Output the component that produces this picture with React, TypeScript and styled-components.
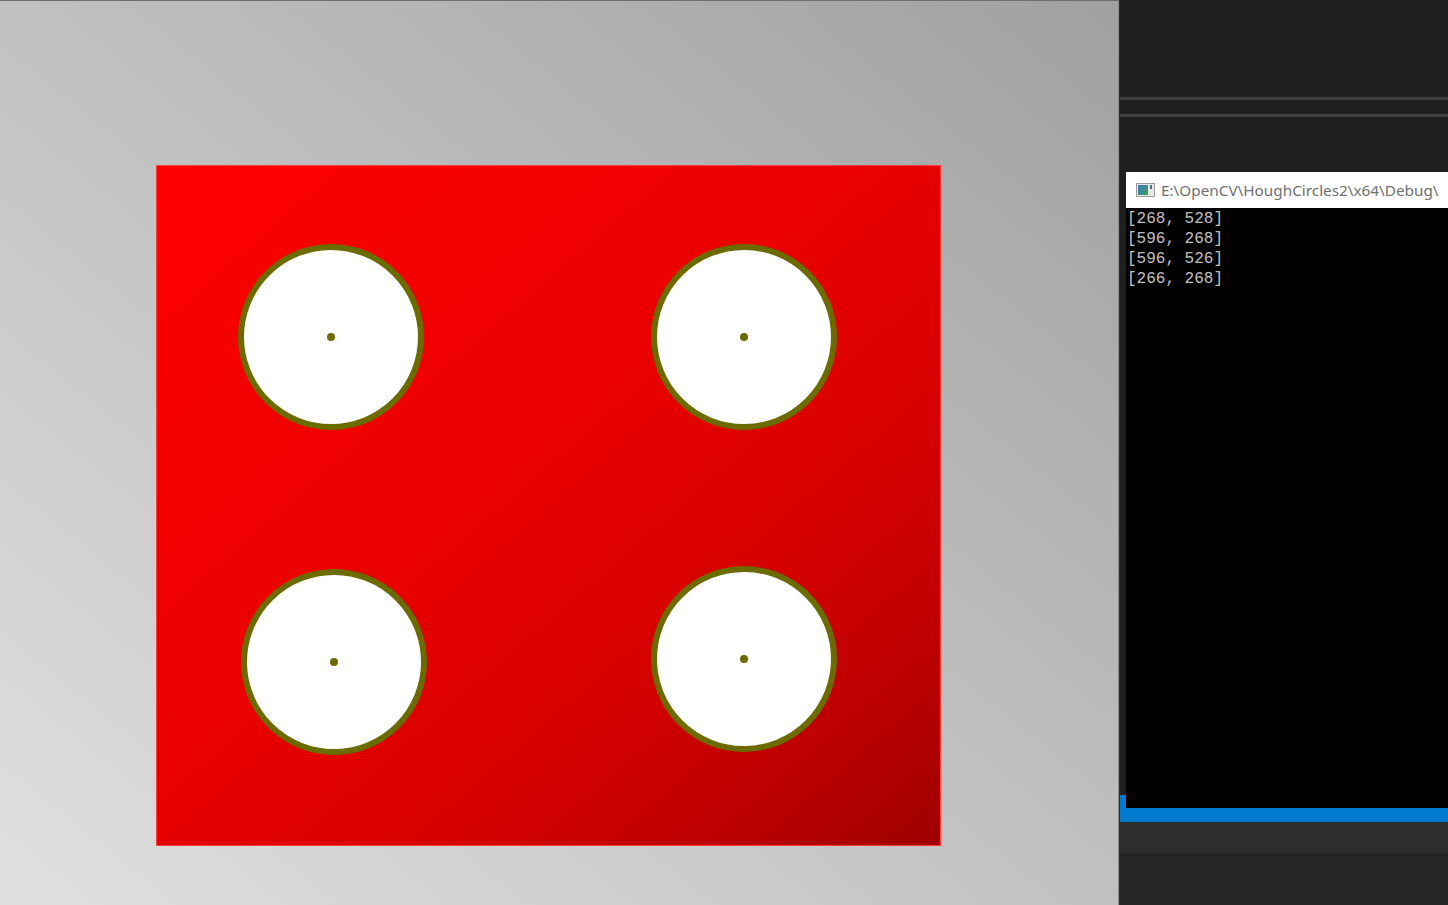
import React from "react";
import styled, { createGlobalStyle } from "styled-components";

const Global = createGlobalStyle`
  html, body { margin: 0; padding: 0; width: 1448px; height: 905px; overflow: hidden; background: #1f1f1f; }
  #root { width: 1448px; height: 905px; }
`;

const Desktop = styled.div`
  display: flex;
  width: 1448px;
  height: 905px;
  overflow: hidden;
`;

const ImageViewer = styled.div`
  width: 1119px;
  flex: none;
  box-sizing: border-box;
  padding: 164px 0 0 156px;
  border-top: 1px solid #6e6e6e;
  border-right: 1px solid #8c8c8c;
  background: linear-gradient(to top right, #e0e0e0 0%, #c4c4c4 45%, #a0a0a0 100%);
`;

const Ide = styled.div`
  position: relative;
  flex: 1;
  display: flex;
  flex-direction: column;
  background: #1f1f1f;
  border-left: 1px solid #2c2c2c;
  overflow: hidden;
`;

const Band = styled.div<{ $h: number; $bg: string }>`
  height: ${(p) => p.$h}px;
  flex: none;
  background: ${(p) => p.$bg};
`;

const Fill = styled.div`
  flex: 1;
  background: #1f1f1f;
`;

const ConsoleWindow = styled.div`
  position: absolute;
  left: 6px;
  top: 172px;
  width: 400px;
  height: 636px;
  display: flex;
  flex-direction: column;
  background: #000;
`;

const TitleBar = styled.div`
  height: 36px;
  flex: none;
  display: flex;
  align-items: center;
  gap: 6px;
  padding-left: 10px;
  background: #ffffff;
  font-family: "Noto Sans", "Liberation Sans", sans-serif;
  font-size: 15.3px;
  color: #707070;
  white-space: nowrap;
  overflow: hidden;
`;

const IconBox = styled.span`
  flex: none;
  display: flex;
  width: 19px;
  height: 14px;
`;

const ConsoleBody = styled.pre`
  margin: 0;
  padding: 1px 0 0 1px;
  font-family: "Liberation Mono", "DejaVu Sans Mono", monospace;
  font-size: 16px;
  line-height: 20px;
  color: #c0c0c0;
`;

const ConsoleIcon = () => (
  <IconBox>
    <svg width="19" height="14" viewBox="0 0 19 14">
      <defs>
        <linearGradient id="ci" x1="0" y1="0" x2="1" y2="1">
          <stop offset="0" stopColor="#3a7bbf" />
          <stop offset="1" stopColor="#3aa05a" />
        </linearGradient>
      </defs>
      <rect x="0.5" y="0.5" width="18" height="13" fill="#e8e8e8" stroke="#9a9a9a" />
      <rect x="2" y="2" width="10" height="10" fill="url(#ci)" />
      <rect x="14" y="2" width="2" height="4" fill="#4a6a8a" />
    </svg>
  </IconBox>
);

const circles = [
  { cx: 175, cy: 172 },
  { cx: 588, cy: 172 },
  { cx: 178, cy: 497 },
  { cx: 588, cy: 494 },
];

const RedImage = () => (
  <svg width="785" height="681" viewBox="0 0 785 681" style={{ display: "block" }}>
    <defs>
      <linearGradient id="red" x1="0" y1="0" x2="1" y2="1">
        <stop offset="0" stopColor="#ff0000" />
        <stop offset="0.45" stopColor="#ea0000" />
        <stop offset="0.7" stopColor="#d40000" />
        <stop offset="0.85" stopColor="#bc0000" />
        <stop offset="1" stopColor="#9e0000" />
      </linearGradient>
    </defs>
    <rect x="0.5" y="0.5" width="784" height="680" fill="url(#red)" stroke="#ff3a3a" strokeWidth="1.2" />
    {circles.map((c, i) => (
      <g key={i}>
        <circle cx={c.cx} cy={c.cy} r={90} fill="#ffffff" stroke="#6b6b00" strokeWidth="6" />
        <circle cx={c.cx} cy={c.cy} r={4} fill="#6b6b00" />
      </g>
    ))}
  </svg>
);

export default function App() {
  return (
    <>
      <Global />
      <Desktop>
        <ImageViewer>
          <RedImage />
        </ImageViewer>
        <Ide>
          <Band $h={97} $bg="#1f1f1f" />
          <Band $h={3} $bg="#3e3e3e" />
          <Band $h={14} $bg="#1f1f1f" />
          <Band $h={3} $bg="#3e3e3e" />
          <Fill />
          <Band $h={27} $bg="#007acc" />
          <Band $h={31} $bg="#2d2d30" />
          <Band $h={52} $bg="#252526" />
          <ConsoleWindow>
            <TitleBar>
              <ConsoleIcon />
              <span>E:\OpenCV\HoughCircles2\x64\Debug\</span>
            </TitleBar>
            <ConsoleBody>{"[268, 528]\n[596, 268]\n[596, 526]\n[266, 268]"}</ConsoleBody>
          </ConsoleWindow>
        </Ide>
      </Desktop>
    </>
  );
}
